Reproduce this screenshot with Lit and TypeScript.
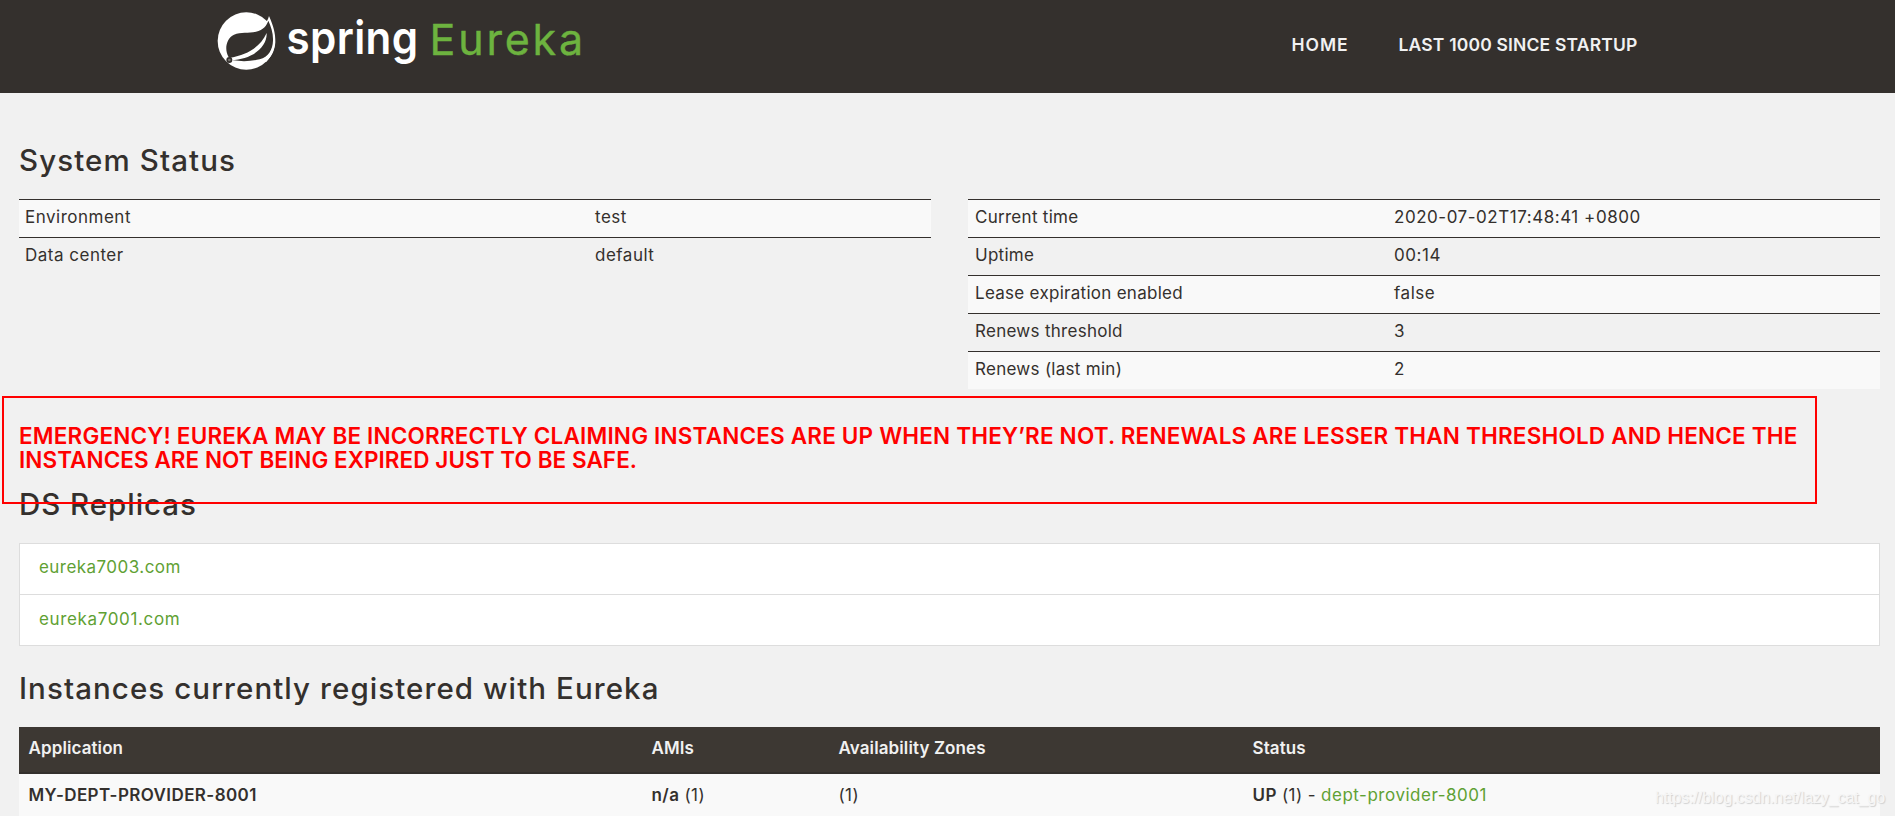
import { LitElement, html, css } from "lit";
import { customElement } from "lit/decorators.js";

interface Row {
  label: string;
  value: string;
}

const general: Row[] = [
  { label: "Environment", value: "test" },
  { label: "Data center", value: "default" },
];

const runtime: Row[] = [
  { label: "Current time", value: "2020-07-02T17:48:41 +0800" },
  { label: "Uptime", value: "00:14" },
  { label: "Lease expiration enabled", value: "false" },
  { label: "Renews threshold", value: "3" },
  { label: "Renews (last min)", value: "2" },
];

const replicas = ["eureka7003.com", "eureka7001.com"];

@customElement("site-header")
class SiteHeader extends LitElement {
  static styles = css`
    :host {
      display: flex;
      height: 93px;
      background: #34302d;
      justify-content: space-between;
      padding: 0 257.5px 0 214px;
      box-sizing: border-box;
    }
    .logo {
      display: block;
    }
    .spring {
      font: 600 46px Inter, sans-serif;
      fill: #fff;
    }
    .eureka {
      font: 400 43px Inter, sans-serif;
      fill: #6db33f;
      stroke: #6db33f;
      stroke-width: 0.4px;
    }
    nav {
      display: flex;
      gap: 50px;
      padding-top: 32px;
      font: 600 17.5px/25px Inter, sans-serif;
      color: #f1f1f1;
      white-space: nowrap;
    }
    .home {
      letter-spacing: 0.9px;
    }
    .last {
      letter-spacing: 0.18px;
    }
  `;

  render() {
    return html`
      <svg class="logo" width="380" height="93" viewBox="0 0 380 93">
        <g transform="translate(0 8) scale(.33333)">
          <circle cx="97" cy="99" r="86" fill="#fff" />
          <path
            d="M165 24C178 52 185 78 184 103C182 130 172 146 156 162L140 150L150 52C156 44 162 36 165 24Z"
            fill="#fff"
          />
          <path
            d="M163 38C158 53 148 65 126 71C103 76 81 71 60 80C37 91 30 124 44 148L58 157C84 161 113 160 137 154C164 147 176 124 177 98C178 76 171 55 163 38Z"
            fill="#34302d"
          />
          <path
            d="M50 149C98 141 139 118 158 75C160 122 108 155 52 156Z"
            fill="#fff"
          />
          <circle cx="46" cy="156" r="9" fill="#34302d" />
          <circle cx="46" cy="156" r="4" fill="#76736f" />
        </g>
        <text class="spring" x="72.5" y="54" textLength="132" lengthAdjust="spacingAndGlyphs">spring</text>
        <text class="eureka" x="215.5" y="54.5" textLength="154">Eureka</text>
      </svg>
      <nav>
        <span class="home">HOME</span>
        <span class="last">LAST 1000 SINCE STARTUP</span>
      </nav>
    `;
  }
}

@customElement("app-root")
class AppRoot extends LitElement {
  static styles = css`
    :host {
      display: block;
      position: relative;
      height: 816px;
      overflow: hidden;
      background: #f1f1f1;
      color: #34302d;
      font: 400 17px/24px Inter, sans-serif;
      letter-spacing: 0.4px;
    }
    main {
      padding: 0 15px 0 19px;
    }
    h1 {
      margin: 0;
      padding-bottom: 2px;
      font-weight: 500;
      font-size: 29.5px;
      line-height: 30px;
      letter-spacing: 1.08px;
    }
    .status-title {
      padding-top: 52px;
      letter-spacing: 1.1px;
    }
    .columns {
      display: grid;
      grid-template-columns: 912px 912px;
      gap: 37px;
      margin-top: 22px;
    }
    .pair {
      display: grid;
      height: 38px;
      box-sizing: border-box;
      border-top: 1px solid #34302d;
      padding: 5px 6px 0;
    }
    .pair:nth-child(odd) {
      background: #f9f9f9;
    }
    .general .pair {
      grid-template-columns: 570px 1fr;
    }
    .runtime .pair {
      padding-left: 7px;
      grid-template-columns: 419px 1fr;
    }
    .general {
      letter-spacing: 0.5px;
    }
    .runtime {
      letter-spacing: 0.28px;
    }
    .runtime .value {
      letter-spacing: 0.53px;
    }
    .alert {
      margin: 35px 80px 0 0;
      color: #f00;
      font-weight: 600;
      font-size: 22.5px;
      line-height: 24px;
      letter-spacing: 0.19px;
    }
    .alert-end {
      letter-spacing: 0.06px;
    }
    .replicas-title {
      margin-top: 17px;
      letter-spacing: 0.96px;
    }
    .marker {
      position: absolute;
      left: 2px;
      top: 396px;
      width: 1815px;
      height: 108px;
      box-sizing: border-box;
      border: 2px solid #f00;
    }
    .list {
      margin-top: 22px;
      border: 1px solid #ddd;
      background: #fff;
      color: #5fa134;
      letter-spacing: 0.45px;
    }
    .list div {
      height: 50px;
      box-sizing: border-box;
      padding: 11px 19px 0;
    }
    .list div + div {
      height: 51px;
      padding-top: 12px;
      border-top: 1px solid #ddd;
      letter-spacing: 0.64px;
    }
    .instances-title {
      margin-top: 27px;
    }
    .grid {
      display: grid;
      grid-template-columns: 623px 187px 414px 1fr;
      padding: 0 9.5px;
      white-space: nowrap;
    }
    .head {
      margin-top: 22px;
      height: 47px;
      box-sizing: border-box;
      padding-top: 9px;
      border-bottom: 2px solid #34302d;
      background: #3d3833;
      color: #f1f1f1;
      font-weight: 600;
      letter-spacing: 0.1px;
    }
    .entry {
      height: 50px;
      padding-top: 9px;
      background: #f9f9f9;
    }
    b {
      font-weight: 600;
    }
    .link {
      color: #5fa134;
      letter-spacing: 0.52px;
    }
    .watermark {
      position: absolute;
      left: 1655px;
      top: 786px;
      font: 16px/24px "Liberation Sans", sans-serif;
      letter-spacing: -0.09px;
      color: #f6f6f6;
      text-shadow: 1px 1px 1px #d0d0d0;
    }
  `;

  private pairs(rows: Row[]) {
    return rows.map(
      (r) => html`<div class="pair"><span>${r.label}</span><span class="value">${r.value}</span></div>`
    );
  }

  render() {
    return html`
      <site-header></site-header>
      <main>
        <h1 class="status-title">System Status</h1>
        <section class="columns">
          <div class="general">${this.pairs(general)}</div>
          <div class="runtime">${this.pairs(runtime)}</div>
        </section>
        <div class="alert">
          EMERGENCY! EUREKA MAY BE INCORRECTLY CLAIMING INSTANCES ARE UP WHEN THEY’RE NOT. RENEWALS ARE LESSER THAN
          THRESHOLD AND HENCE THE<br /><span class="alert-end">INSTANCES ARE NOT BEING EXPIRED JUST TO BE SAFE.</span>
        </div>
        <h1 class="replicas-title">DS Replicas</h1>
        <div class="list">${replicas.map((r) => html`<div>${r}</div>`)}</div>
        <h1 class="instances-title">Instances currently registered with Eureka</h1>
        <div class="grid head">
          <span>Application</span><span>AMIs</span><span>Availability Zones</span><span>Status</span>
        </div>
        <div class="grid entry">
          <b>MY-DEPT-PROVIDER-8001</b>
          <span><b>n/a</b> (1)</span>
          <span>(1)</span>
          <span><b>UP</b> (1) - <span class="link">dept-provider-8001</span></span>
        </div>
      </main>
      <div class="marker"></div>
      <div class="watermark">https://blog.csdn.net/lazy_cat_go</div>
    `;
  }
}
